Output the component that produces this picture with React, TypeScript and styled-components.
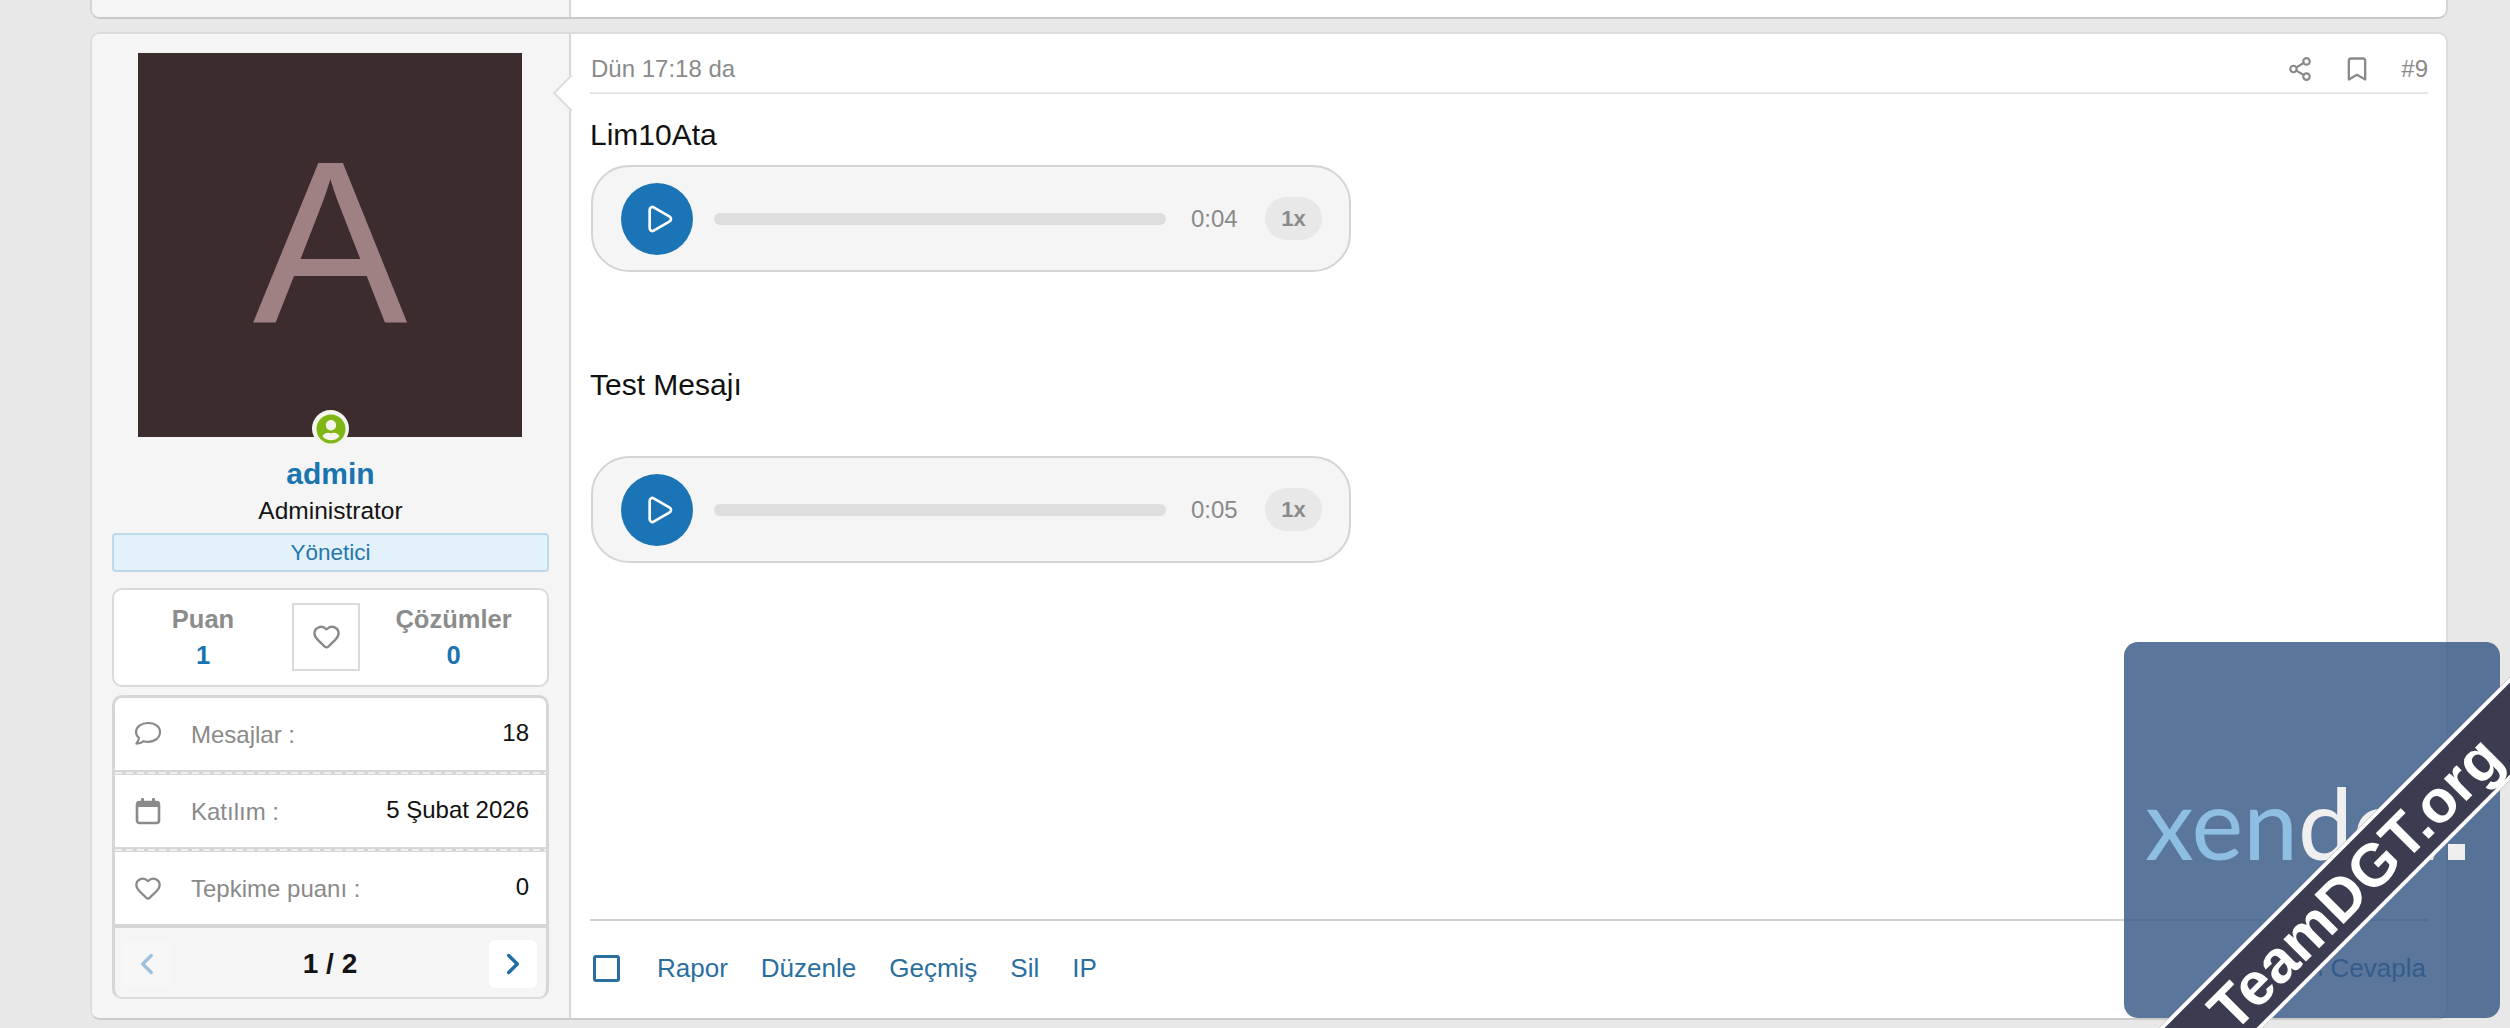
import React from 'react';
import styled, { createGlobalStyle } from 'styled-components';
import { Bookmark, ChevronLeft, ChevronRight, Heart, Play, Reply, Share2 } from 'lucide-react';
import { FaUserCircle } from 'react-icons/fa';

const GlobalStyle = createGlobalStyle`
  * { box-sizing: border-box; }
  html, body {
    margin: 0;
    height: 100%;
    overflow: hidden;
    background: #e8e8e8;
    font-family: "Liberation Sans", Arial, sans-serif;
  }
`;

const Page = styled.div`
  position: relative;
  width: 2510px;
  height: 1028px;
  overflow: hidden;
  padding-left: 90px;
`;

const PrevCard = styled.div`
  width: 2358px;
  height: 19px;
  margin-bottom: 13px;
  display: flex;
  background: #fff;
  border: 2px solid #d6d6d6;
  border-top: none;
  border-bottom-color: #c8c8c8;
  border-radius: 0 0 10px 10px;
  overflow: hidden;
`;

const PrevSide = styled.div`
  width: 479px;
  background: #f5f5f5;
  border-right: 2px solid #d6d6d6;
`;

const Card = styled.article`
  width: 2358px;
  height: 988px;
  display: flex;
  background: #fff;
  border: 2px solid #dcdcdc;
  border-bottom-color: #cbcbcb;
  border-radius: 10px;
`;

const Sidebar = styled.aside`
  width: 479px;
  flex: none;
  padding: 19px 20px 0;
  background: #f5f5f5;
  border-right: 2px solid #d6d6d6;
  border-radius: 8px 0 0 8px;
  display: flex;
  flex-direction: column;
  align-items: stretch;
`;

const AvatarWrap = styled.div`
  position: relative;
  width: 384px;
  height: 384px;
  margin-left: 26px;
`;

const Avatar = styled.div`
  width: 100%;
  height: 100%;
  background: #3c2c2d;
  color: #a08183;
  font-size: 232px;
  line-height: 380px;
  text-align: center;
`;

const StatusDot = styled.span`
  position: absolute;
  left: 174px;
  bottom: -10px;
  width: 37px;
  height: 37px;
  border-radius: 50%;
  background: #f5f5ee;
  color: #7fb514;
  display: flex;
  align-items: center;
  justify-content: center;
`;

const UserName = styled.div`
  margin-top: 17px;
  height: 40px;
  line-height: 40px;
  text-align: center;
  font-size: 30px;
  font-weight: 700;
  color: #1a74b0;
`;

const UserTitle = styled.div`
  height: 33px;
  line-height: 34px;
  text-align: center;
  font-size: 24.5px;
  color: #141414;
`;

const Banner = styled.div`
  margin-top: 6px;
  height: 39px;
  line-height: 35px;
  text-align: center;
  font-size: 22.5px;
  color: #2577ad;
  background: #e3f1fb;
  border: 2px solid #bcd9ee;
  border-radius: 4px;
`;

const StatsBox = styled.div`
  margin-top: 16px;
  height: 99px;
  padding-bottom: 2px;
  display: grid;
  grid-template-columns: 178px 68px 1fr;
  align-items: center;
  background: #fff;
  border: 2px solid #dadada;
  border-radius: 10px;
`;

const Stat = styled.div`
  display: flex;
  flex-direction: column;
  align-items: center;
  font-weight: 700;
  gap: 8px;
`;

const StatLabel = styled.span`
  font-size: 25.5px;
  line-height: 28px;
  color: #8c8c8c;
`;

const StatValue = styled.span`
  font-size: 25.5px;
  line-height: 28px;
  color: #1a74b0;
`;

const LikeBox = styled.div`
  width: 68px;
  height: 68px;
  border: 2px solid #dadada;
  display: flex;
  align-items: center;
  justify-content: center;
  color: #8a8a8a;
`;

const InfoBox = styled.div`
  margin-top: 8px;
  height: 304px;
  background: #d6d6d6;
  border: 3px solid #d6d6d6;
  border-bottom: 2px solid #dcdcdc;
  border-radius: 10px;
  overflow: hidden;
`;

const InfoRow = styled.div`
  height: 72px;
  display: flex;
  align-items: center;
  background: #fff;
  padding: 0 17px 0 19px;
`;

const RowSeparator = styled.div`
  height: 5px;
  padding-top: 2px;
  background: #d6d6d6;
  &::after {
    content: '';
    display: block;
    height: 2px;
    background: repeating-linear-gradient(90deg, #efefef 0 7px, #d6d6d6 7px 11px);
  }
`;

const InfoIcon = styled.span`
  width: 28px;
  height: 28px;
  margin-right: 29px;
  color: #8a8a8a;
  display: flex;
  align-items: center;
  justify-content: center;
`;

const InfoLabel = styled.span`
  font-size: 24px;
  color: #8a8a8a;
  position: relative;
  top: 1px;
`;

const InfoValue = styled.span`
  margin-left: auto;
  font-size: 24px;
  color: #111;
  position: relative;
  top: -1px;
`;

const Pager = styled.div`
  height: 73px;
  margin-top: 4px;
  display: flex;
  align-items: center;
  justify-content: space-between;
  background: #f5f5f5;
  padding: 0 9px 2px 8px;
`;

const PagerButton = styled.button<{ $disabled?: boolean }>`
  width: 48px;
  height: 48px;
  padding: 0;
  border: none;
  border-radius: 6px;
  background: ${({ $disabled }) => ($disabled ? '#f7f7f7' : '#fff')};
  color: ${({ $disabled }) => ($disabled ? '#9dc2da' : '#1f6ea3')};
  display: flex;
  align-items: center;
  justify-content: center;
`;

const PagerText = styled.span`
  font-size: 28px;
  font-weight: 700;
  color: #141414;
`;

const Content = styled.div`
  position: relative;
  flex: 1;
  min-width: 0;
  padding: 0 18px 0 19px;
  display: flex;
  flex-direction: column;
`;

const Notch = styled.span`
  position: absolute;
  left: -13px;
  top: 46px;
  width: 26px;
  height: 26px;
  background: #fff;
  border-left: 2px solid #dcdcdc;
  border-bottom: 2px solid #dcdcdc;
  transform: rotate(45deg);
`;

const PostHeader = styled.header`
  height: 60px;
  padding-top: 11px;
  display: flex;
  align-items: center;
  border-bottom: 2px solid #e6e6e6;
  font-size: 24px;
  color: #8a8a8a;
`;

const PostDate = styled.span`
  margin-left: 1px;
`;

const HeaderActions = styled.div`
  margin-left: auto;
  display: flex;
  align-items: center;
  gap: 30px;
`;

const PostBody = styled.div`
  padding-top: 24px;
`;

const Paragraph = styled.p<{ $gapTop?: number }>`
  margin: ${({ $gapTop }) => $gapTop ?? 0}px 0 0;
  font-size: 30px;
  line-height: 34px;
  color: #111;
`;

const Player = styled.div<{ $gapTop: number }>`
  width: 760px;
  height: 107px;
  margin: ${({ $gapTop }) => $gapTop}px 0 0 1px;
  padding: 0 27px 0 28px;
  display: flex;
  align-items: center;
  background: #f5f5f5;
  border: 2px solid #d4d4d4;
  border-radius: 38px;
`;

const PlayButton = styled.button`
  width: 72px;
  height: 72px;
  flex: none;
  padding: 0 0 0 3px;
  border: none;
  border-radius: 50%;
  background: #1a74b6;
  color: #fff;
  display: flex;
  align-items: center;
  justify-content: center;
`;

const Track = styled.div`
  flex: 1;
  height: 12px;
  margin: 0 25px 0 21px;
  border-radius: 6px;
  background: #dedede;
`;

const Time = styled.span`
  width: 47px;
  font-size: 24px;
  color: #8a8a8a;
`;

const Speed = styled.span`
  width: 57px;
  height: 43px;
  margin-left: 27px;
  border-radius: 22px;
  background: #e8e8e8;
  color: #8a8a8a;
  font-size: 22px;
  font-weight: 700;
  display: flex;
  align-items: center;
  justify-content: center;
`;

const PostFooter = styled.footer`
  margin-top: auto;
  height: 99px;
  padding: 0 2px 2px 3px;
  display: flex;
  align-items: center;
  border-top: 2px solid #d2d2d2;
`;

const CheckBox = styled.span`
  width: 27px;
  height: 27px;
  margin-right: 37px;
  border: 3px solid #2a6f9e;
  border-radius: 3px;
`;

const ActionLink = styled.a`
  margin-right: 33px;
  font-size: 26px;
  color: #2a6f9e;
  text-decoration: none;
`;

const ReplyLink = styled(ActionLink)`
  margin: 0 0 0 auto;
  display: flex;
  align-items: center;
  gap: 6px;
`;

const Watermark = styled.div`
  position: absolute;
  left: 2124px;
  top: 642px;
  width: 376px;
  height: 376px;
  border-radius: 14px;
  background: rgba(54, 88, 133, 0.82);
`;

const LogoText = styled.div`
  position: absolute;
  left: 21px;
  top: 120px;
  font-family: Lato, "Open Sans", sans-serif;
  font-weight: 400;
  font-size: 98px;
  line-height: 120px;
  color: #8ebfe3;
  white-space: nowrap;
`;

const LogoAccent = styled.span`
  color: #efefef;
`;

const LogoDot = styled.span`
  display: inline-block;
  width: 17px;
  height: 16px;
  margin-left: -6px;
  background: #efefef;
`;

const Ribbon = styled.div`
  position: absolute;
  left: -119px;
  top: 205px;
  width: 700px;
  height: 73px;
  background: #3c3c50;
  border-top: 4px solid #fff;
  border-bottom: 4px solid #fff;
  color: #fff;
  font-size: 60px;
  font-weight: 700;
  line-height: 65px;
  text-align: center;
  transform: rotate(-45deg);
`;

const CommentIcon = () => (
  <svg width="28" height="26" viewBox="0 0 28 26" fill="none" stroke="currentColor" strokeWidth="2.2" strokeLinejoin="round">
    <path d="M14 2C7.4 2 2 5.900 2 11c0 2.400 1.200 4.400 3 6-.2 2-1.200 3.600-2.600 5.600 3 0 5.600-1 7.400-2.400 1.300.4 2.700.6 4.200.6 6.600 0 12-3.900 12-9.800S20.600 2 14 2z" />
  </svg>
);

const CalendarIcon = () => (
  <svg width="26" height="28" viewBox="0 0 26 28" fill="none">
    <rect x="2" y="5" width="22" height="21" rx="2.500" stroke="currentColor" strokeWidth="2.6" />
    <rect x="2" y="4" width="22" height="6" rx="2" fill="currentColor" />
    <rect x="6" y="1" width="3" height="5" rx="1" fill="currentColor" />
    <rect x="17" y="1" width="3" height="5" rx="1" fill="currentColor" />
  </svg>
);

const AudioPlayer: React.FC<{ time: string; gapTop: number }> = ({ time, gapTop }) => (
  <Player $gapTop={gapTop}>
    <PlayButton>
      <Play size={32} strokeWidth={2} />
    </PlayButton>
    <Track />
    <Time>{time}</Time>
    <Speed>1x</Speed>
  </Player>
);

const App: React.FC = () => (
  <Page>
    <GlobalStyle />
    <PrevCard>
      <PrevSide />
    </PrevCard>
    <Card>
      <Sidebar>
        <AvatarWrap>
          <Avatar>A</Avatar>
          <StatusDot>
            <FaUserCircle size={30} />
          </StatusDot>
        </AvatarWrap>
        <UserName>admin</UserName>
        <UserTitle>Administrator</UserTitle>
        <Banner>Yönetici</Banner>
        <StatsBox>
          <Stat>
            <StatLabel>Puan</StatLabel>
            <StatValue>1</StatValue>
          </Stat>
          <LikeBox>
            <Heart size={29} strokeWidth={2} />
          </LikeBox>
          <Stat>
            <StatLabel>Çözümler</StatLabel>
            <StatValue>0</StatValue>
          </Stat>
        </StatsBox>
        <InfoBox>
          <InfoRow>
            <InfoIcon><CommentIcon /></InfoIcon>
            <InfoLabel>Mesajlar :</InfoLabel>
            <InfoValue>18</InfoValue>
          </InfoRow>
          <RowSeparator />
          <InfoRow>
            <InfoIcon><CalendarIcon /></InfoIcon>
            <InfoLabel>Katılım :</InfoLabel>
            <InfoValue>5 Şubat 2026</InfoValue>
          </InfoRow>
          <RowSeparator />
          <InfoRow>
            <InfoIcon><Heart size={32} strokeWidth={2} /></InfoIcon>
            <InfoLabel>Tepkime puanı :</InfoLabel>
            <InfoValue>0</InfoValue>
          </InfoRow>
          <Pager>
            <PagerButton $disabled>
              <ChevronLeft size={34} strokeWidth={2.4} />
            </PagerButton>
            <PagerText>1 / 2</PagerText>
            <PagerButton>
              <ChevronRight size={34} strokeWidth={2.4} />
            </PagerButton>
          </Pager>
        </InfoBox>
      </Sidebar>
      <Content>
        <Notch />
        <PostHeader>
          <PostDate>Dün 17:18 da</PostDate>
          <HeaderActions>
            <Share2 size={26} strokeWidth={2} />
            <Bookmark size={28} strokeWidth={2} />
            <span>#9</span>
          </HeaderActions>
        </PostHeader>
        <PostBody>
          <Paragraph>Lim10Ata</Paragraph>
          <AudioPlayer time="0:04" gapTop={13} />
          <Paragraph $gapTop={96}>Test Mesajı</Paragraph>
          <AudioPlayer time="0:05" gapTop={54} />
        </PostBody>
        <PostFooter>
          <CheckBox />
          <ActionLink>Rapor</ActionLink>
          <ActionLink>Düzenle</ActionLink>
          <ActionLink>Geçmiş</ActionLink>
          <ActionLink>Sil</ActionLink>
          <ActionLink>IP</ActionLink>
          <ReplyLink>
            <Reply size={26} strokeWidth={2} />
            Cevapla
          </ReplyLink>
        </PostFooter>
      </Content>
    </Card>
    <Watermark>
      <LogoText>xen<LogoAccent>dev</LogoAccent><LogoDot /></LogoText>
      <Ribbon><span>TeamDGT.org</span></Ribbon>
    </Watermark>
  </Page>
);

export default App;
